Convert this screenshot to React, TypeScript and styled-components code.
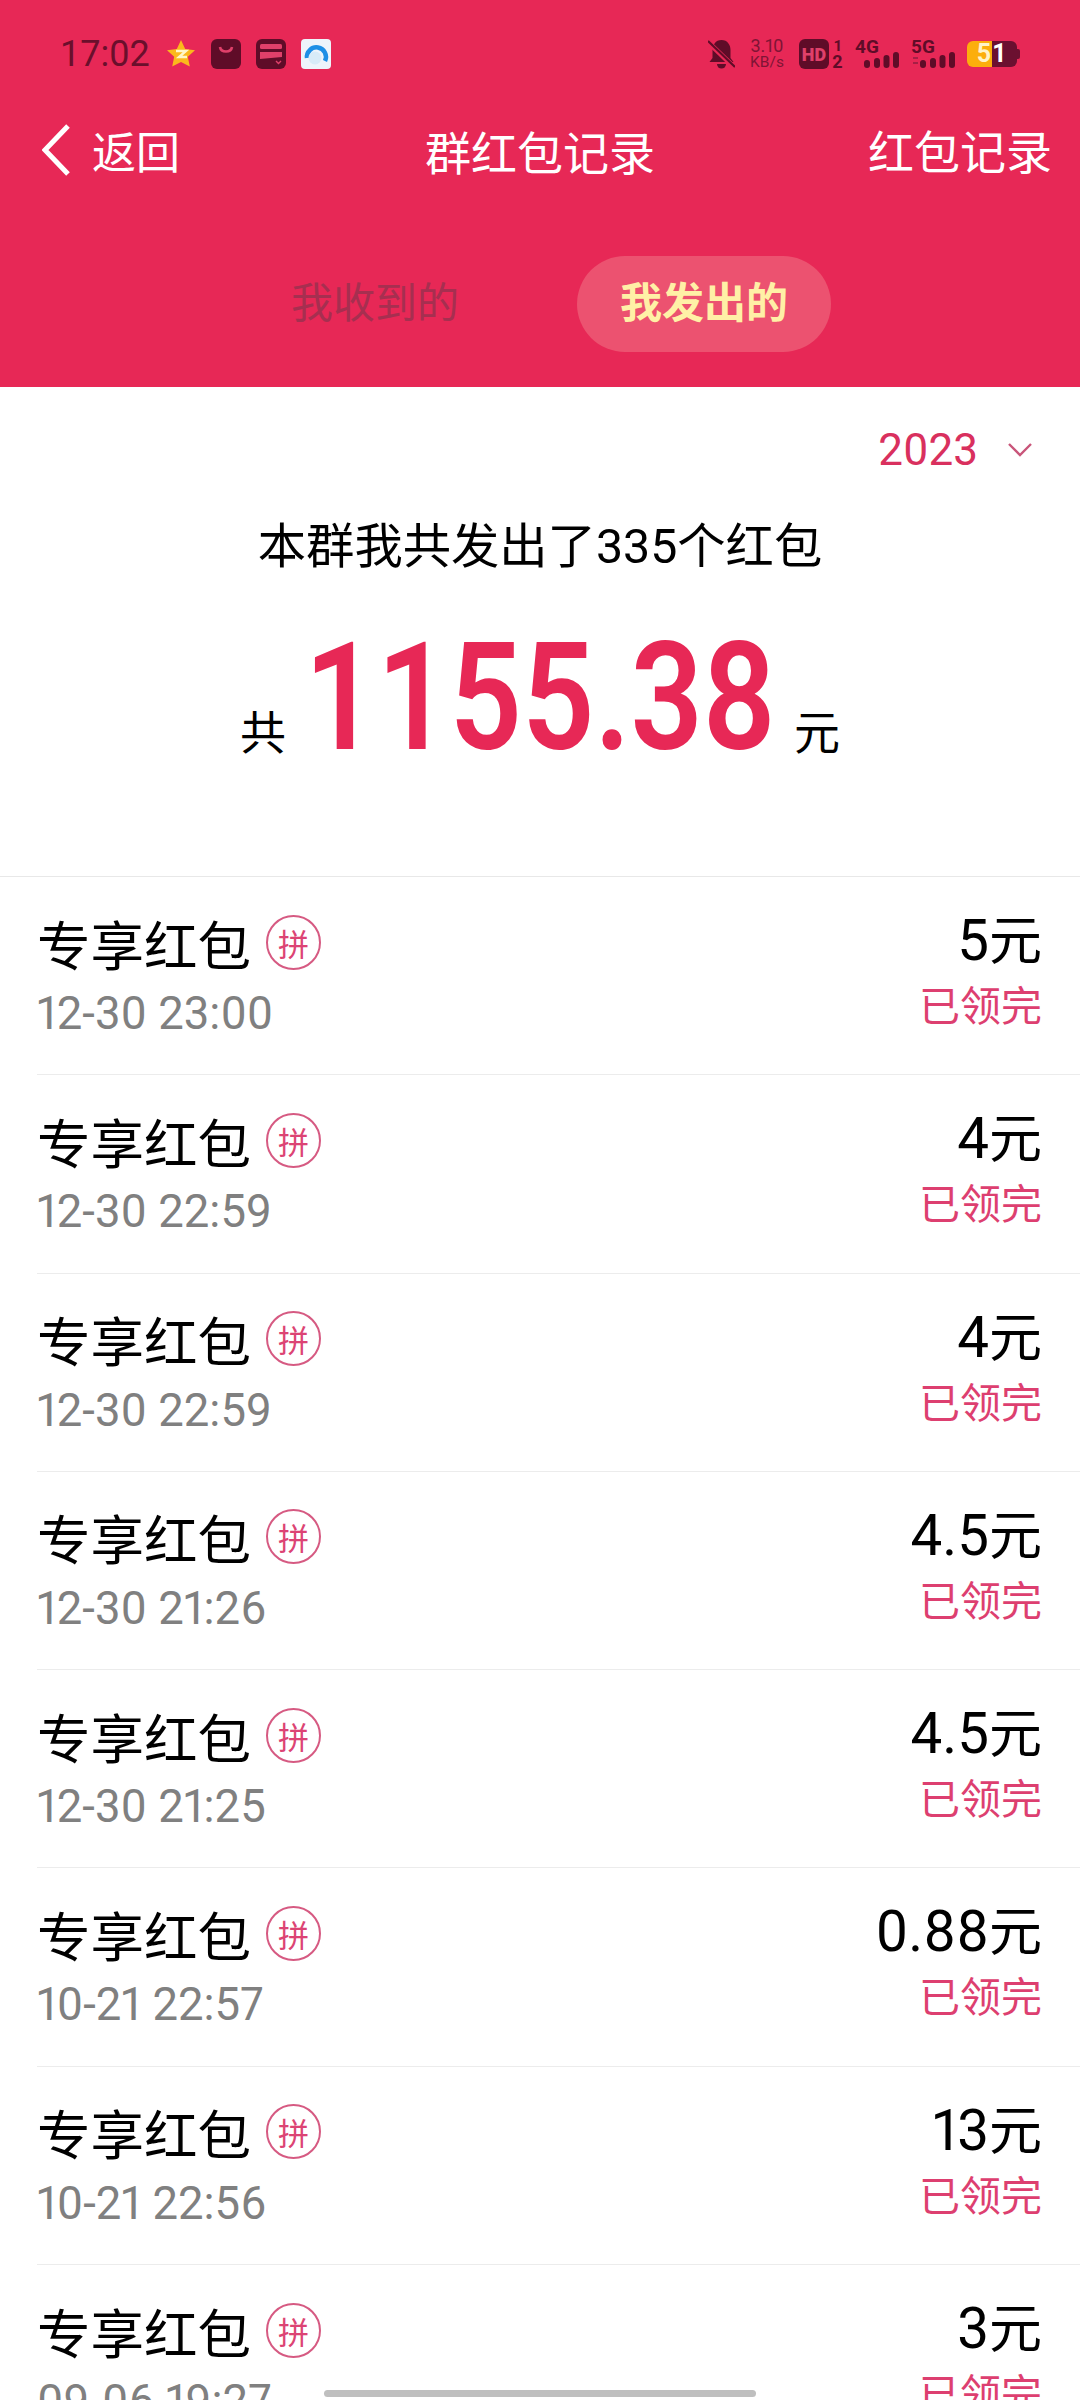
import styled, { createGlobalStyle } from "styled-components";

const CJK = `Roboto, "Noto Sans CJK SC", sans-serif`;

const DARK = "#5f0c28";
const RED = "#e72856";

const GlobalStyle = createGlobalStyle`
  html, body {
    margin: 0;
    padding: 0;
    background: #fff;
  }
  * {
    box-sizing: border-box;
  }
`;

const Page = styled.div`
  position: relative;
  width: 1080px;
  height: 2400px;
  overflow: hidden;
  background: #fff;
  font-family: ${CJK};
  font-variant-numeric: proportional-nums;
`;

const Header = styled.header`
  height: 387px;
  background: ${RED};
  display: flex;
  flex-direction: column;
`;

const StatusBar = styled.div`
  height: 72px;
  margin-top: 18px;
  padding: 0 60px;
  display: flex;
  align-items: center;
  justify-content: space-between;
`;

const StatusGroup = styled.div<{ $gap?: number }>`
  display: flex;
  align-items: center;
  gap: ${(p) => p.$gap ?? 0}px;
`;

const Clock = styled.span`
  font-size: 36px;
  font-variant-numeric: tabular-nums;
  width: 91px;
  color: #6b0f2c;
`;

const Speed = styled.div`
  width: 36px;
  margin: 0 14px;
  display: flex;
  flex-direction: column;
  align-items: center;
  line-height: 16px;
  font-size: 15.5px;
  color: #7f1435;
  span:first-child {
    font-size: 18px;
  }
`;

const HdBadge = styled.div`
  width: 30px;
  height: 30px;
  border-radius: 6px;
  background: ${DARK};
  color: #e0406a;
  font-size: 18px;
  font-weight: 900;
  display: flex;
  align-items: center;
  justify-content: center;
`;

const SimDigits = styled.div`
  width: 13px;
  margin-left: 2px;
  display: flex;
  flex-direction: column;
  align-items: center;
  font-weight: 700;
  color: ${DARK};
  span {
    font-size: 15px;
    line-height: 14px;
  }
  span:last-child {
    font-size: 18px;
    line-height: 17px;
  }
`;

const Signal = styled.div`
  width: 45px;
  height: 30px;
  display: flex;
  flex-direction: column;
  svg {
    display: block;
  }
`;

const SignalLabel = styled.span`
  height: 13px;
  line-height: 15px;
  font-size: 19px;
  font-weight: 700;
  color: ${DARK};
`;

const Battery = styled.div`
  position: relative;
  width: 50px;
  height: 26px;
  margin-right: 3px;
  display: flex;
  font-size: 25px;
  line-height: 26px;
  font-weight: 700;
  &::after {
    content: "";
    position: absolute;
    right: -3px;
    top: 8px;
    width: 3px;
    height: 10px;
    border-radius: 0 2px 2px 0;
    background: #6b1030;
  }
`;

const BatteryCell = styled.span<{ $charged?: boolean }>`
  width: 25px;
  text-align: center;
  border-radius: ${(p) => (p.$charged ? "6px 0 0 6px" : "0 6px 6px 0")};
  padding: ${(p) => (p.$charged ? "0 0 0 9px" : "0 11px 0 0")};
  background: ${(p) => (p.$charged ? "#fcae0c" : "#6b1030")};
  color: ${(p) => (p.$charged ? "#fff3c8" : "#fff")};
`;

const NavBar = styled.nav`
  height: 66px;
  margin-top: 26px;
  padding: 0 28px;
  display: grid;
  grid-template-columns: 1fr auto 1fr;
  align-items: center;
  color: #fff;
`;

const BackLink = styled.div`
  padding-left: 14px;
  display: flex;
  align-items: center;
  gap: 22px;
  font-size: 44px;
`;

const NavTitle = styled.div`
  font-size: 46px;
`;

const NavAction = styled.div`
  font-size: 46px;
  justify-self: end;
  margin-bottom: 2px;
`;

const Tabs = styled.div`
  margin-top: 74px;
  padding-left: 258px;
  display: flex;
  align-items: center;
  gap: 85px;
`;

const Tab = styled.div<{ $active?: boolean }>`
  height: 96px;
  width: ${(p) => (p.$active ? "254px" : "234px")};
  padding-bottom: 10px;
  border-radius: 48px;
  display: flex;
  align-items: center;
  justify-content: center;
  font-size: 42px;
  font-weight: ${(p) => (p.$active ? 700 : 400)};
  color: ${(p) => (p.$active ? "#fff0a6" : "#a62f50")};
  background: ${(p) => (p.$active ? "#ec5270" : "transparent")};
`;

const Summary = styled.section`
  height: 490px;
  border-bottom: 1px solid #e8e8e8;
  display: flex;
  flex-direction: column;
`;

const YearPicker = styled.div`
  align-self: flex-end;
  margin: 38px 48px 0 0;
  height: 50px;
  display: flex;
  align-items: center;
  gap: 30px;
  font-size: 44px;
  color: #d9305e;
`;

const SummaryLine = styled.div`
  margin-top: 40px;
  text-align: center;
  font-size: 48.3px;
  line-height: 64px;
  color: #000;
`;

const TotalRow = styled.div`
  margin-top: 44px;
  display: flex;
  align-items: baseline;
  justify-content: center;
  color: #000;
  font-size: 46px;
`;

const TotalAmount = styled.span`
  width: 508px;
  display: flex;
  justify-content: center;
  font-size: 151px;
  line-height: 150px;
  font-weight: 600;
  font-variant-numeric: tabular-nums;
  color: ${RED};
  white-space: nowrap;
  transform: scaleX(0.84);
`;

const RowList = styled.div`
  display: flex;
  flex-direction: column;
`;

const Row = styled.div`
  height: 198.3px;
  margin-left: 37px;
  padding: 29px 38px 0 0;
  border-bottom: 1px solid #ececec;
  display: flex;
  justify-content: space-between;
`;

const RowColumn = styled.div<{ $end?: boolean }>`
  display: flex;
  flex-direction: column;
  align-items: ${(p) => (p.$end ? "flex-end" : "flex-start")};
`;

const TitleLine = styled.div`
  display: flex;
  align-items: center;
  gap: 15px;
  height: 72px;
  font-size: 53.5px;
  color: #000;
`;

const GroupBadge = styled.span`
  width: 55px;
  height: 55px;
  border-radius: 50%;
  border: 2px solid #d65a82;
  display: flex;
  align-items: center;
  justify-content: center;
  font-size: 31px;
  color: #dc4474;
`;

const DateText = styled.div`
  margin-top: 8px;
  font-size: 45.5px;
  line-height: 56px;
  color: #808080;
`;

const Amount = styled.div`
  height: 72px;
  line-height: 70px;
  font-size: 56.5px;
  color: #000;
`;

const AmountUnit = styled.span`
  font-size: 53px;
`;

const Status = styled.div`
  margin-top: 1px;
  font-size: 41px;
  line-height: 56px;
  color: #dd3f70;
`;

const HomeBar = styled.div`
  position: absolute;
  left: 324px;
  bottom: 3px;
  width: 432px;
  height: 7px;
  border-radius: 4px;
  background: #bfbfbf;
`;

function StarIcon() {
  return (
    <svg width="30" height="30" viewBox="0 0 30 30">
      <path d="M15 1l4.2 9 9.8 1.2-7.2 6.6 2 9.7L15 23l-8.8 4.5 2-9.7L1 11.2 10.8 10z" fill="#fbb81c" />
      <path d="M10 12h10l-7 6h8" stroke="#fff7c8" strokeWidth="2.4" fill="none" />
    </svg>
  );
}

function BagIcon() {
  return (
    <svg width="30" height="30" viewBox="0 0 30 30">
      <rect width="30" height="30" rx="6" fill={DARK} />
      <path d="M9 8c1 6 11 6 12 0" stroke="#e0406a" strokeWidth="2.6" fill="none" />
    </svg>
  );
}

function WalletIcon() {
  return (
    <svg width="30" height="30" viewBox="0 0 30 30">
      <rect width="30" height="30" rx="6" fill={DARK} />
      <rect x="4" y="5" width="22" height="5" rx="1.5" fill="#e0406a" />
      <path d="M4 13h22v5L4 20z" fill="#e0406a" />
      <path d="M20 22l2.5 2.5L25 22" stroke="#e0406a" strokeWidth="1.4" fill="none" />
    </svg>
  );
}

function BrowserIcon() {
  return (
    <svg width="30" height="30" viewBox="0 0 30 30">
      <rect width="30" height="30" rx="4" fill="#eef4fb" />
      <path d="M6 19a9.5 9.5 0 1 1 18 3" stroke="#1e8fe6" strokeWidth="4.5" fill="none" />
      <circle cx="14" cy="19" r="6.5" fill="#d8ebf8" />
    </svg>
  );
}

function MutedBell() {
  return (
    <svg width="27" height="30" viewBox="0 0 27 30">
      <path d="M13.5 1c6 0 9 5 9 10v8l3 4h-24l3-4v-8c0-5 3-10 9-10z" fill={DARK} />
      <path d="M9 25a4.5 4.5 0 0 0 9 0z" fill={DARK} />
      <path d="M0 3l27 26" stroke={RED} strokeWidth="5" />
      <path d="M0 2l27 26" stroke={DARK} strokeWidth="2.2" />
    </svg>
  );
}

function SignalBars({ arrows }: { arrows?: boolean }) {
  const bars = [
    [9, 8],
    [19, 10],
    [28.5, 13],
    [38, 16],
  ];
  return (
    <svg width="45" height="16" viewBox="0 0 45 16">
      {arrows && <path d="M2 6h5M2 11h5" stroke="#a61f45" strokeWidth="2" />}
      {bars.map(([x, h]) => (
        <rect key={x} x={x} y={16 - h} width="6" height={h} rx="3" fill={DARK} />
      ))}
    </svg>
  );
}

function BackChevron() {
  return (
    <svg width="28" height="52" viewBox="0 0 28 52">
      <path d="M26 2L3 26l23 24" stroke="#fff" strokeWidth="5" fill="none" />
    </svg>
  );
}

function YearChevron() {
  return (
    <svg width="24" height="14" viewBox="0 0 24 14">
      <path d="M1 1l11 11L23 1" stroke="#c9557a" strokeWidth="2.4" fill="none" />
    </svg>
  );
}

interface IPacket {
  date: string;
  amount: string;
}

const packets: IPacket[] = [
  { date: "12-30 23:00", amount: "5" },
  { date: "12-30 22:59", amount: "4" },
  { date: "12-30 22:59", amount: "4" },
  { date: "12-30 21:26", amount: "4.5" },
  { date: "12-30 21:25", amount: "4.5" },
  { date: "10-21 22:57", amount: "0.88" },
  { date: "10-21 22:56", amount: "13" },
  { date: "09-06 19:27", amount: "3" },
];

export default function App() {
  return (
    <Page>
      <GlobalStyle />
      <Header>
        <StatusBar>
          <StatusGroup $gap={15}>
            <Clock>17:02</Clock>
            <StarIcon />
            <BagIcon />
            <WalletIcon />
            <BrowserIcon />
          </StatusGroup>
          <StatusGroup $gap={11}>
            <StatusGroup>
              <MutedBell />
              <Speed>
                <span>3.10</span>
                <span>KB/s</span>
              </Speed>
              <HdBadge>HD</HdBadge>
              <SimDigits>
                <span>1</span>
                <span>2</span>
              </SimDigits>
            </StatusGroup>
            <Signal>
              <SignalLabel>4G</SignalLabel>
              <SignalBars />
            </Signal>
            <Signal>
              <SignalLabel>5G</SignalLabel>
              <SignalBars arrows />
            </Signal>
            <Battery>
              <BatteryCell $charged>5</BatteryCell>
              <BatteryCell>1</BatteryCell>
            </Battery>
          </StatusGroup>
        </StatusBar>
        <NavBar>
          <BackLink>
            <BackChevron />
            返回
          </BackLink>
          <NavTitle>群红包记录</NavTitle>
          <NavAction>红包记录</NavAction>
        </NavBar>
        <Tabs>
          <Tab>我收到的</Tab>
          <Tab $active>我发出的</Tab>
        </Tabs>
      </Header>
      <Summary>
        <YearPicker>
          2023
          <YearChevron />
        </YearPicker>
        <SummaryLine>本群我共发出了335个红包</SummaryLine>
        <TotalRow>
          <span>共</span>
          <TotalAmount>1155.38</TotalAmount>
          <span>元</span>
        </TotalRow>
      </Summary>
      <RowList>
        {packets.map((packet, index) => (
          <Row key={index}>
            <RowColumn>
              <TitleLine>
                专享红包
                <GroupBadge>拼</GroupBadge>
              </TitleLine>
              <DateText>{packet.date}</DateText>
            </RowColumn>
            <RowColumn $end>
              <Amount>
                {packet.amount}
                <AmountUnit>元</AmountUnit>
              </Amount>
              <Status>已领完</Status>
            </RowColumn>
          </Row>
        ))}
      </RowList>
      <HomeBar />
    </Page>
  );
}
